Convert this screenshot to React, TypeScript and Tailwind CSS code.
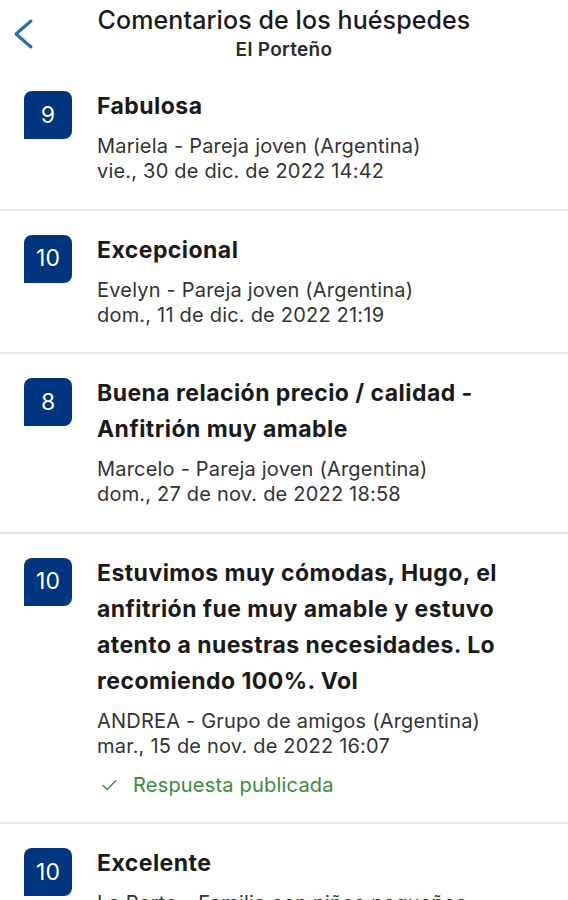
import { Check } from 'lucide-react';

type Review = {
  score: number;
  title: string;
  author: string;
  date: string;
  replied?: boolean;
};

const reviews: Review[] = [
  { score: 9, title: 'Fabulosa', author: 'Mariela - Pareja joven (Argentina)', date: 'vie., 30 de dic. de 2022 14:42' },
  { score: 10, title: 'Excepcional', author: 'Evelyn - Pareja joven (Argentina)', date: 'dom., 11 de dic. de 2022 21:19' },
  {
    score: 8,
    title: 'Buena relación precio / calidad - Anfitrión muy amable',
    author: 'Marcelo - Pareja joven (Argentina)',
    date: 'dom., 27 de nov. de 2022 18:58',
  },
  {
    score: 10,
    title: 'Estuvimos muy cómodas, Hugo, el anfitrión fue muy amable y estuvo atento a nuestras necesidades. Lo recomiendo 100%. Vol',
    author: 'ANDREA - Grupo de amigos (Argentina)',
    date: 'mar., 15 de nov. de 2022 16:07',
    replied: true,
  },
  { score: 10, title: 'Excelente', author: 'La Porte - Familia con niños pequeños', date: 'sáb., 12 de nov. de 2022 10:31' },
];

const ReviewRow = ({ review }: { review: Review }) => (
  <div className="flex gap-[25px] pl-6 pr-5 pt-[21px] pb-[24.5px] border-b-2 border-[#e6e6e6]">
    {/* Score badge */}
    <div className="mt-[3px] w-12 h-12 shrink-0 flex items-center justify-center bg-[#003580] text-white text-[23px] rounded-t-lg rounded-br-lg">
      {review.score}
    </div>

    <div className="flex-1 min-w-0">
      <h3 className="text-[23px] leading-[36px] font-bold text-[#1a1a1a] tracking-[0.45px]">{review.title}</h3>
      <div className="mt-[10px] text-[20px] leading-[25px] text-[#333333] tracking-[0.2px]">
        <p className="whitespace-nowrap">{review.author}</p>
        <p>{review.date}</p>
      </div>
      {review.replied && (
        <div className="flex items-center gap-[14px] mt-[14px] pl-[3px] text-[20px] leading-[25px] tracking-[0.2px] text-[#3a8c3a]">
          <Check size={19} strokeWidth={1.8} className="text-[#3a8c3a]" />
          <span>Respuesta publicada</span>
        </div>
      )}
    </div>
  </div>
);

export default function App() {
  return (
    <div className="w-[568px] h-[900px] overflow-hidden bg-white font-['Inter',_'Liberation_Sans',_sans-serif]">
      {/* Header */}
      <div className="relative h-[67px] flex flex-col items-center pt-[3px]">
        <button className="absolute left-[12px] top-[18px] text-[#1f6fb2]">
          <svg width="22" height="32" viewBox="0 0 22 32" fill="none">
            <polyline points="19,3 4,16 19,29" stroke="currentColor" strokeWidth="3" strokeLinecap="round" strokeLinejoin="round" />
          </svg>
        </button>
        <h1 className="text-[25px] leading-[34px] font-medium text-[#1a1a1a] tracking-[0.1px]">
          Comentarios de los huéspedes
        </h1>
        <p className="mt-[1px] text-[19px] leading-[24px] font-semibold text-[#2a2a2a] tracking-[0.3px]">El Porteño</p>
      </div>

      <div>
        {reviews.map((review, idx) => (
          <ReviewRow key={idx} review={review} />
        ))}
      </div>
    </div>
  );
}
